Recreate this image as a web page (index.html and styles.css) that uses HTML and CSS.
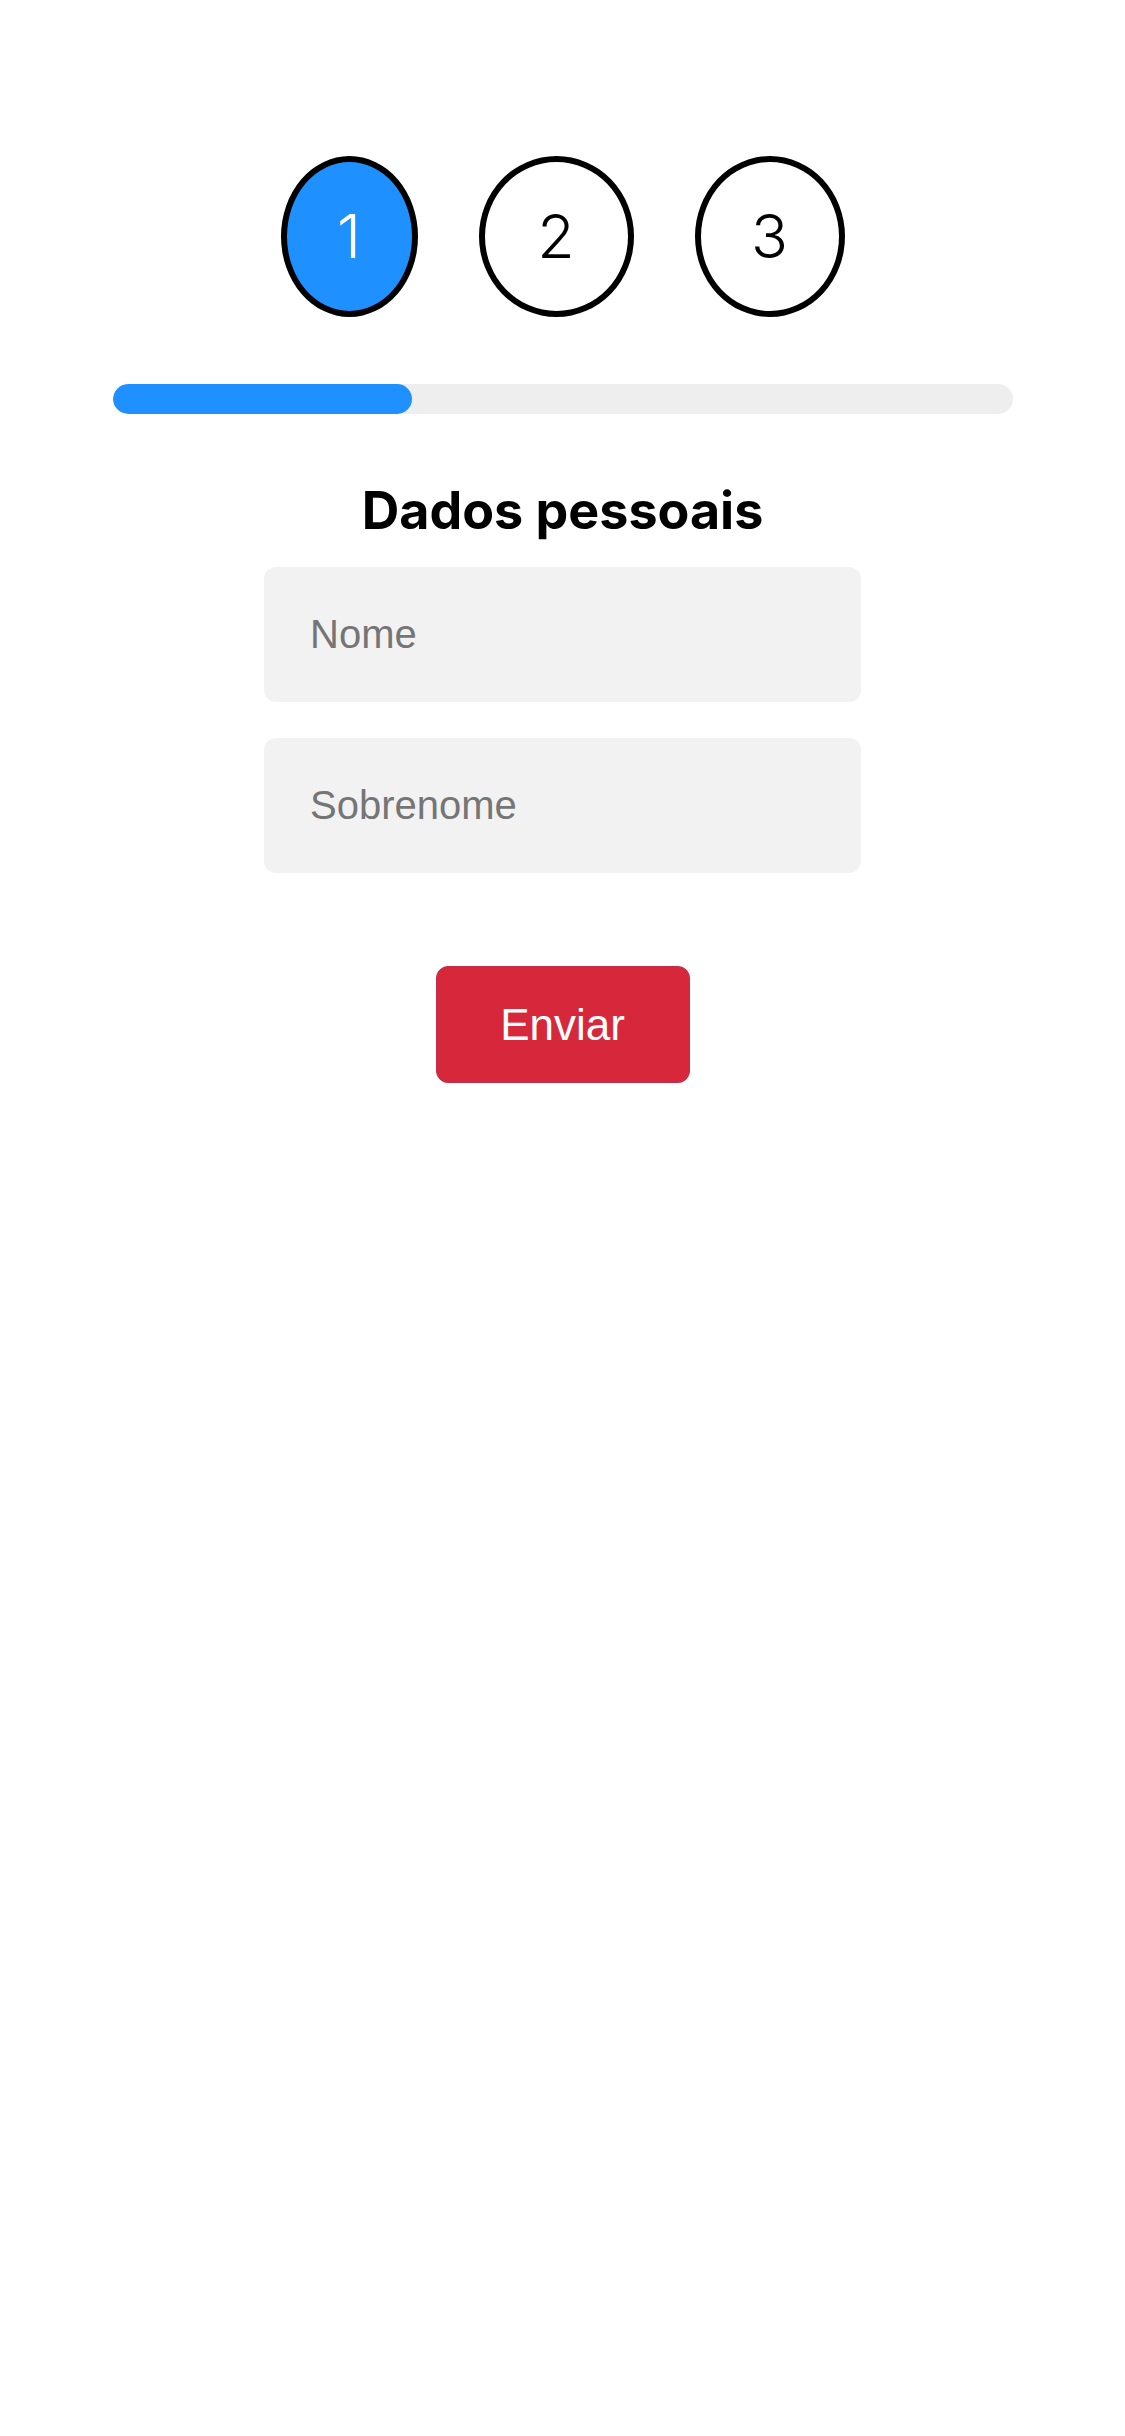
FILE: index.html
```html
<!DOCTYPE html>
<html lang="pt">
<head>
<meta charset="utf-8">
<title>Dados pessoais</title>
<link rel="stylesheet" href="styles.css">
</head>
<body>
<main class="page">
  <div class="steps">
    <div class="step step--active step--narrow">1</div>
    <div class="step step--wide">2</div>
    <div class="step">3</div>
  </div>
  <div class="progress">
    <div class="progress__fill" style="width: 33.3333%"></div>
  </div>
  <form class="form">
    <h2 class="form__title">Dados pessoais</h2>
    <input class="form__input" type="text" placeholder="Nome">
    <input class="form__input" type="text" placeholder="Sobrenome">
    <button class="form__button" type="button">Enviar</button>
  </form>
</main>
</body>
</html>
```

FILE: styles.css
```css
* {
  box-sizing: border-box;
}

html, body {
  margin: 0;
  padding: 0;
  background: #ffffff;
}

body {
  font-family: "Liberation Sans", Arial, sans-serif;
}

.page {
  padding-top: 156px;
  display: flex;
  flex-direction: column;
  align-items: center;
}

.steps {
  display: flex;
  justify-content: center;
  gap: 61px;
}

.step {
  width: 150px;
  height: 161px;
  border: 6px solid #000;
  border-radius: 50%;
  display: flex;
  align-items: center;
  justify-content: center;
  font-family: Inter, "Noto Sans", sans-serif;
  font-weight: 300;
  font-size: 61px;
  line-height: 1;
  color: #000;
  background: #fff;
}

.step--narrow {
  width: 137px;
}

.step--wide {
  width: 155px;
}

.step--active {
  background: #1e90ff;
  color: #fff;
}

.progress {
  margin-top: 67px;
  width: 900px;
  height: 30px;
  border-radius: 15px;
  background: #eeeeee;
  overflow: hidden;
}

.progress__fill {
  height: 100%;
  border-radius: 15px;
  background: #1e90ff;
}

.form {
  display: flex;
  flex-direction: column;
  align-items: center;
  margin-top: 66px;
}

.form__title {
  margin: 0 0 25px;
  font-family: Inter, "Noto Sans", sans-serif;
  font-weight: 700;
  font-size: 52px;
  line-height: 1.2;
  color: #000;
}

.form__input {
  width: 597px;
  height: 135px;
  margin: 0 0 36px;
  padding: 0 46px;
  border: none;
  border-radius: 12px;
  background: #f2f2f2;
  font-family: "Liberation Sans", Arial, sans-serif;
  font-size: 40px;
  color: #000;
  outline: none;
}

.form__input::placeholder {
  color: #757575;
}

.form__button {
  margin-top: 57px;
  width: 254px;
  height: 117px;
  border: 1px solid #c0304c;
  border-radius: 12px;
  background: #d7283b;
  color: #fff;
  font-family: "Liberation Sans", Arial, sans-serif;
  font-size: 44px;
  cursor: pointer;
}
```
